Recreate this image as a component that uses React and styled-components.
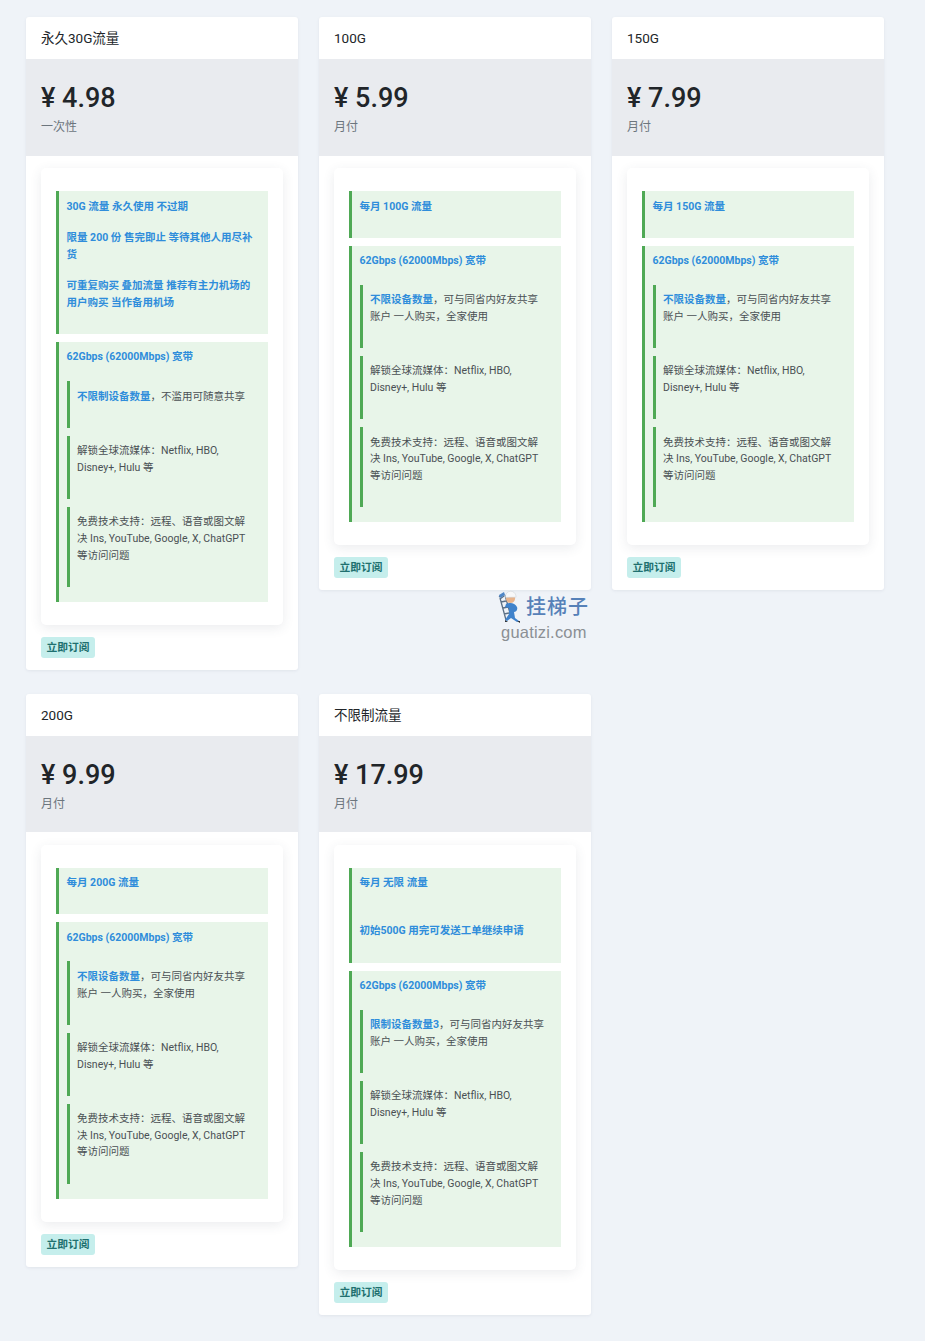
import React from "react";
import styled, { createGlobalStyle } from "styled-components";

const Global = createGlobalStyle`
  html, body { margin: 0; padding: 0; background: #eff3f8; }
  body { font-family: Roboto, "Noto Sans CJK SC", sans-serif; }
  * { box-sizing: border-box; }
`;
const Page = styled.main`
  position: relative;
  width: 925px;
  min-height: 1341px;
  padding: 17px 41px 26px 26px;
`;
const Grid = styled.div`
  display: grid;
  grid-template-columns: repeat(3, 272px);
  column-gap: 21px;
  row-gap: 23.6px;
  align-items: start;
`;
const Card = styled.article`
  background: #fff;
  border-radius: 3px;
  box-shadow: 0 1px 3px rgba(120, 130, 150, 0.12);
`;
const CardHeader = styled.h3`
  margin: 0;
  height: 42px;
  padding: 0 15px;
  font-size: 13.5px;
  font-weight: 400;
  line-height: 42px;
  color: #212529;
`;
const PriceBand = styled.div`
  height: 96.5px;
  padding: 18px 15px 0;
  background: #e9ebef;
`;
const Price = styled.div`
  font-size: 27px;
  font-weight: 500;
  line-height: 42px;
  color: #212529;
`;
const Period = styled.div`
  margin-top: -1px;
  font-size: 12px;
  line-height: 18px;
  color: #6c757d;
`;
const CardBody = styled.div`
  padding: 12.5px 15px 12px;
`;
const FeatureCard = styled.div`
  padding: 23px 15px 15px;
  background: #fff;
  border-radius: 5px;
  box-shadow: 0 3px 12px rgba(60, 70, 90, 0.1);
`;
const Feature = styled.div`
  margin-bottom: 8px;
  padding: 7.5px;
  background: #e8f5e9;
  border-left: 3px solid #4fa955;
  font-size: 10.5px;
  line-height: 16.6px;
`;
const Highlight = styled.p`
  margin: 0 0 15px;
  font-weight: 700;
  color: #2f8ddb;
`;
const SubItem = styled.div`
  margin-bottom: 8px;
  padding: 7.5px;
  border-left: 3px solid #4fa955;
  color: #4a5054;
`;
const SubText = styled.p`
  margin: 0 0 15px;
`;
const Strong = styled.strong`
  font-weight: 700;
  color: #2f8ddb;
`;
const SubscribeButton = styled.button`
  display: block;
  margin-top: 12px;
  width: 54px;
  height: 21px;
  padding: 0;
  border: 0;
  border-radius: 3px;
  background: #c5eeec;
  color: #20706f;
  font-family: inherit;
  font-size: 10.75px;
  font-weight: 700;
  line-height: 21px;
`;
const Watermark = styled.div`
  position: absolute;
  left: 497px;
  top: 590px;
  width: 96px;
  height: 54px;
  pointer-events: none;
`;
const WatermarkRow = styled.div`
  display: flex;
  align-items: flex-start;
  gap: 3px;
`;
const WatermarkName = styled.span`
  font-family: "Noto Sans CJK SC", sans-serif;
  font-size: 20px;
  font-weight: 500;
  line-height: 32px;
  letter-spacing: 1px;
  color: #5681b8;
`;
const WatermarkUrl = styled.div`
  position: absolute;
  left: 4px;
  top: 32px;
  font-family: "Liberation Sans", sans-serif;
  font-size: 16.5px;
  line-height: 20px;
  letter-spacing: 0.2px;
  color: #8b8f94;
`;

const Worker = () => (
  <svg width="26" height="34" viewBox="0 0 26 34" fill="none">
    <path d="M2 7 L6 4 M7 6 L3 9 M3 8 L9 30 M8 5 L14 27 M4 12 L9 11 M6 18 L11 17 M7 24 L12 23" stroke="#5b6f85" strokeWidth="1.3" />
    <path d="M2 5 L7 2 L8 5 L3 8 Z" fill="#4f86c6" />
    <path d="M9 14 C13 12 18 13 20 17 C21 20 19 22 17 22 L18 28 L22 31 L20 32 L14 28 L10 31 L8 30 L12 24 L12 18 L8 17 Z" fill="#3f82cb" />
    <circle cx="13.5" cy="8.5" r="4.6" fill="#e8b48c" />
    <path d="M8.5 7 A5.2 5.2 0 0 1 19 6 L19 7.2 L8.5 7.4 Z" fill="#f7f8f9" stroke="#c9ced4" strokeWidth="0.5" />
    <path d="M8 30 L11 32 L8 32 Z M20 31 L23 31 L23 33 Z" fill="#2b2f36" />
  </svg>
);

const device = <><Strong>不限设备数量</Strong>，可与同省内好友共享账户 一人购买，全家使用</>;
const bandwidth = "62Gbps (62000Mbps) 宽带";
const plans = [
  { name: "永久30G流量", price: "¥ 4.98", period: "一次性", intro: ["30G 流量 永久使用 不过期", "限量 200 份 售完即止 等待其他人用尽补货", "可重复购买 叠加流量 推荐有主力机场的用户购买 当作备用机场"], device: <><Strong>不限制设备数量</Strong>，不滥用可随意共享</> },
  { name: "100G", price: "¥ 5.99", period: "月付", intro: ["每月 100G 流量"], device },
  { name: "150G", price: "¥ 7.99", period: "月付", intro: ["每月 150G 流量"], device },
  { name: "200G", price: "¥ 9.99", period: "月付", intro: ["每月 200G 流量"], device },
  { name: "不限制流量", price: "¥ 17.99", period: "月付", intro: ["每月 无限 流量", <><br />初始500G 用完可发送工单继续申请</>], device: <><Strong>限制设备数量3</Strong>，可与同省内好友共享账户 一人购买，全家使用</> },
];

export default function App() {
  return (
    <Page>
      <Global />
      <Grid>
        {plans.map((plan) => (
          <Card key={plan.name}>
            <CardHeader>{plan.name}</CardHeader>
            <PriceBand>
              <Price>{plan.price}</Price>
              <Period>{plan.period}</Period>
            </PriceBand>
            <CardBody>
              <FeatureCard>
                <Feature>
                  {plan.intro.map((line, i) => <Highlight key={i}>{line}</Highlight>)}
                </Feature>
                <Feature>
                  <Highlight>{bandwidth}</Highlight>
                  <SubItem><SubText>{plan.device}</SubText></SubItem>
                  <SubItem><SubText>解锁全球流媒体：Netflix, HBO, Disney+, Hulu 等</SubText></SubItem>
                  <SubItem><SubText>免费技术支持：远程、语音或图文解决 Ins, YouTube, Google, X, ChatGPT 等访问问题</SubText></SubItem>
                </Feature>
              </FeatureCard>
              <SubscribeButton>立即订阅</SubscribeButton>
            </CardBody>
          </Card>
        ))}
      </Grid>
      <Watermark>
        <WatermarkRow>
          <Worker />
          <WatermarkName>挂梯子</WatermarkName>
        </WatermarkRow>
        <WatermarkUrl>guatizi.com</WatermarkUrl>
      </Watermark>
    </Page>
  );
}
